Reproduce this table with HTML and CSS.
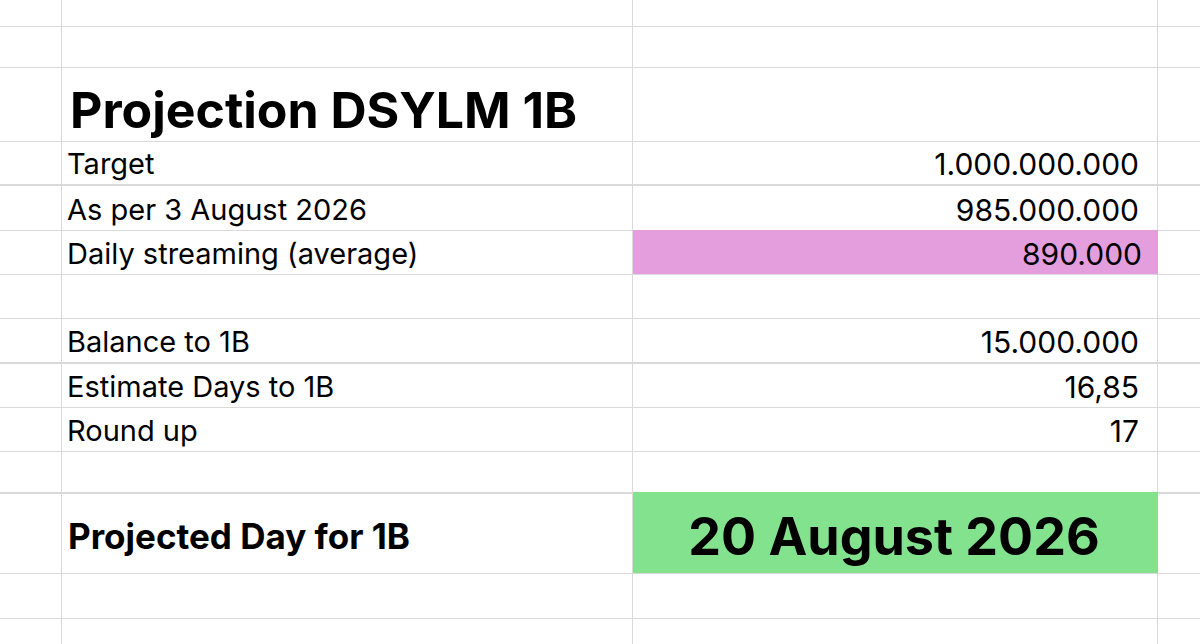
FILE: index.html
```html
<!DOCTYPE html>
<html>
<head>
<meta charset="utf-8">
<link rel="stylesheet" href="styles.css">
</head>
<body>
<div class="sheet">
  <div class="c"></div><div class="c"></div><div class="c"></div><div class="c"></div>
  <div class="c"></div><div class="c"></div><div class="c"></div><div class="c"></div>
  <div class="c"></div><div class="c title">Projection DSYLM 1B</div><div class="c"></div><div class="c"></div>
  <div class="c thick"></div><div class="c thick lbl">Target</div><div class="c thick num">1.000.000.000</div><div class="c thick"></div>
  <div class="c"></div><div class="c lbl">As per 3 August 2026</div><div class="c num">985.000.000</div><div class="c"></div>
  <div class="c"></div><div class="c lbl">Daily streaming (average)</div><div class="c num pink">890.000</div><div class="c"></div>
  <div class="c"></div><div class="c"></div><div class="c"></div><div class="c"></div>
  <div class="c thick"></div><div class="c thick lbl">Balance to 1B</div><div class="c thick num">15.000.000</div><div class="c thick"></div>
  <div class="c"></div><div class="c lbl">Estimate Days to 1B</div><div class="c num">16,85</div><div class="c"></div>
  <div class="c"></div><div class="c lbl">Round up</div><div class="c num">17</div><div class="c"></div>
  <div class="c thick"></div><div class="c thick"></div><div class="c thick"></div><div class="c thick"></div>
  <div class="c"></div><div class="c proj">Projected Day for 1B</div><div class="c date">20 August 2026</div><div class="c"></div>
  <div class="c"></div><div class="c"></div><div class="c"></div><div class="c"></div>
  <div class="c"></div><div class="c"></div><div class="c"></div><div class="c"></div>
</div>
</body>
</html>
```

FILE: styles.css
```css
html, body {
  margin: 0;
  padding: 0;
  background: #ffffff;
}
body {
  width: 1200px;
  height: 644px;
  overflow: hidden;
  font-family: Inter, "Liberation Sans", sans-serif;
  color: #000000;
}
.sheet {
  display: grid;
  grid-template-columns: 62px 571px 525px 60px;
  grid-template-rows: 27px 41px 74px 44px 45px 44px 44px 45px 44px 44px 42px 80px 45px 30px;
}
.c {
  box-sizing: border-box;
  border-right: 1px solid #dadada;
  border-bottom: 1px solid #dadada;
  display: flex;
  align-items: flex-end;
  white-space: nowrap;
  overflow: visible;
}
.c.thick {
  border-bottom-width: 2px;
}
.title {
  font-size: 50px;
  font-weight: 700;
  padding-left: 8px;
  padding-bottom: 6px;
  line-height: 1;
}
.lbl {
  font-size: 29px;
  padding-left: 5px;
  padding-bottom: 2px;
  line-height: 1.2;
}
.num {
  font-size: 30px;
  justify-content: flex-end;
  padding-right: 18px;
  padding-bottom: 2px;
  line-height: 1.2;
}
.pink {
  background: #e59edd;
  border-right-color: #e59edd;
  box-shadow: 0 -1px 0 #e59edd;
  padding-right: 15px;
}
.proj {
  font-size: 35px;
  font-weight: 700;
  padding-left: 6px;
  align-items: center;
  line-height: 1;
  padding-top: 6px;
}
.date {
  background: #83e28e;
  border-right-color: #83e28e;
  box-shadow: 0 -2px 0 #83e28e;
  font-size: 52px;
  font-weight: 700;
  justify-content: center;
  align-items: center;
  line-height: 1;
  padding-top: 6px;
  padding-right: 2px;
}
```
